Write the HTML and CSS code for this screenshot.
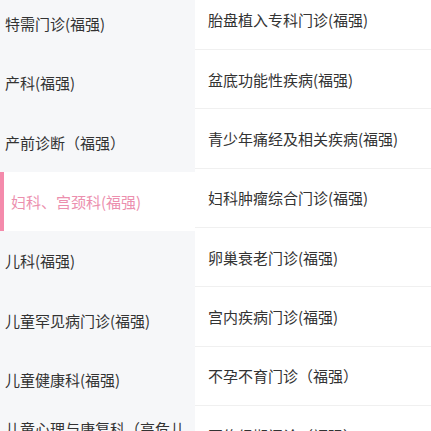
FILE: index.html
```html
<!DOCTYPE html>
<html lang="zh-CN">
  <head>
    <meta charset="utf-8">
    <link rel="stylesheet" href="styles.css">
  </head>
  <body>
    <div class="dept-picker">
      <ul class="dept-list">
        <li class="dept">特需门诊(福强)</li>
        <li class="dept">产科(福强)</li>
        <li class="dept">产前诊断（福强）</li>
        <li class="dept active">妇科、宫颈科(福强)</li>
        <li class="dept">儿科(福强)</li>
        <li class="dept">儿童罕见病门诊(福强)</li>
        <li class="dept">儿童健康科(福强)</li>
        <li class="dept">儿童心理与康复科（高危儿随访）(福强)</li>
      </ul>
      <ul class="clinic-list">
        <li class="clinic">胎盘植入专科门诊(福强)</li>
        <li class="clinic">盆底功能性疾病(福强)</li>
        <li class="clinic">青少年痛经及相关疾病(福强)</li>
        <li class="clinic">妇科肿瘤综合门诊(福强)</li>
        <li class="clinic">卵巢衰老门诊(福强)</li>
        <li class="clinic">宫内疾病门诊(福强)</li>
        <li class="clinic">不孕不育门诊（福强）</li>
        <li class="clinic">围绝经期门诊（福强）</li>
      </ul>
    </div>
  </body>
</html>
```

FILE: styles.css
```css
html, body {
  margin: 0;
  height: 100%;
  overflow: hidden;
  background: #fff;
}

body {
  font-family: "Noto Sans CJK SC", "Noto Sans", sans-serif;
  font-size: 15px;
  color: #333;
}

ul {
  list-style: none;
  margin: 0;
  padding: 0;
}

.dept-picker {
  display: flex;
  height: 100%;
}

.dept-list {
  width: 195px;
  flex-shrink: 0;
  background: #f6f7f9;
  margin-top: -6px;
}

.dept {
  display: flex;
  align-items: center;
  min-height: 59.33px;
  padding: 0 8px 0 5px;
  box-sizing: border-box;
  line-height: 21px;
}

.dept.active {
  background: #fff;
  color: #ec8fae;
  border-left: 4px solid #f48aab;
  padding-left: 7px;
}

.clinic-list {
  flex: 1;
  margin-top: -9.3px;
}

.clinic {
  display: flex;
  align-items: center;
  height: 59.33px;
  padding-left: 13px;
  box-sizing: border-box;
  border-bottom: 1px solid #f0f0f0;
}
```
